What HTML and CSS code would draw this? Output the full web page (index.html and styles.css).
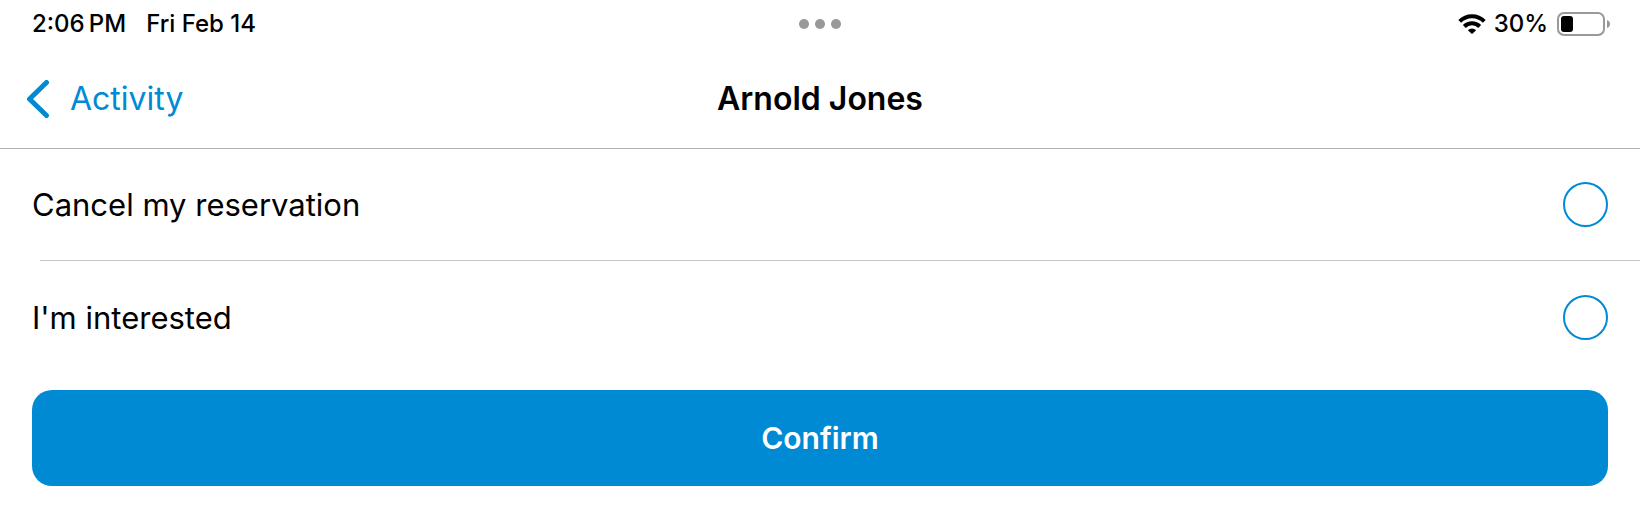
FILE: index.html
```html
<!DOCTYPE html>
<html lang="en">
<head>
<meta charset="utf-8">
<meta name="viewport" content="width=device-width, initial-scale=1">
<title>Arnold Jones</title>
<link rel="stylesheet" href="styles.css">
</head>
<body>
<div class="status">
  <div class="status-left"><span>2:06&#8201;PM</span><span>Fri Feb 14</span></div>
  <div class="dots"><span class="dot"></span><span class="dot"></span><span class="dot"></span></div>
  <div class="status-right">
    <svg class="wifi" viewBox="0 0 28 20" aria-label="Wi-Fi">
      <g fill="none" stroke="#000" stroke-width="4">
        <path d="M1.700 7.400A17.400 17.400 0 0 1 26.300 7.400"/>
        <path d="M6.300 12.500A10.900 10.900 0 0 1 21.700 12.500"/>
      </g>
      <path d="M14 20L9.800 16.200Q14 12.800 18.200 16.200Z"/>
    </svg>
    <span class="percent">30%</span>
    <svg class="battery" viewBox="0 0 53 24" aria-label="Battery">
      <rect x="1" y="1" width="46" height="22" rx="6" fill="none" stroke="#999" stroke-width="2"/>
      <rect x="4" y="4" width="12" height="16" rx="3"/>
      <path d="M50 8Q53 9 53 12T50 16Z" fill="#999"/>
    </svg>
  </div>
</div>
<header class="nav">
  <a class="back" href="#">
    <svg class="chevron" viewBox="0 0 24 38" aria-hidden="true"><path d="M20.500 2.500L3.500 19L20.500 35.500" fill="none" stroke="currentColor" stroke-width="5" stroke-linecap="round" stroke-linejoin="round"/></svg>
    <span>Activity</span>
  </a>
  <h1 class="title">Arnold Jones</h1>
</header>
<form class="form">
  <label class="option"><span>Cancel my reservation</span><input class="radio" type="radio" name="reply" value="cancel"></label>
  <hr class="divider">
  <label class="option"><span>I'm interested</span><input class="radio" type="radio" name="reply" value="interested"></label>
  <button class="confirm" type="button">Confirm</button>
</form>
</body>
</html>
```
FILE: styles.css
```css
* {
  box-sizing: border-box;
}

body {
  margin: 0;
  background: #fff;
  color: #000;
  font-family: Inter, "Liberation Sans", sans-serif;
}

.status,
.nav {
  display: grid;
  grid-template-columns: 1fr auto 1fr;
  align-items: center;
}

.status {
  height: 48px;
  padding: 0 30px;
  font-size: 24px;
  font-weight: 500;
  line-height: 46px;
}

.status-left {
  display: flex;
  gap: 20px;
  padding-left: 2px;
}

.dots {
  display: flex;
  gap: 6px;
}

.dot {
  width: 10px;
  height: 10px;
  border-radius: 50%;
  background: #999;
}

.status-right {
  display: flex;
  align-items: center;
  justify-content: flex-end;
}

.wifi {
  width: 28px;
  height: 20px;
}

.percent {
  margin: 0 9px 0 8px;
}

.battery {
  width: 53px;
  height: 24px;
}

.nav {
  padding: 2px 26px 0;
  border-bottom: 1px solid #b2b2b2;
  line-height: 98px;
}

.back {
  display: flex;
  align-items: center;
  justify-self: start;
  gap: 20px;
  color: #008ad4;
  font-size: 32px;
  text-decoration: none;
}

.chevron {
  width: 24px;
  height: 38px;
}

.title {
  margin: 0;
  font-size: 32px;
  font-weight: 600;
}

.form {
  display: flex;
  flex-direction: column;
}

.option {
  display: flex;
  align-items: center;
  justify-content: space-between;
  padding: 33px 32px;
  font-size: 31px;
  line-height: 42px;
}

.radio {
  appearance: none;
  width: 45px;
  height: 45px;
  margin: 0;
  border: 2px solid #008ad4;
  border-radius: 50%;
}

.radio:checked {
  background: #008ad4;
  box-shadow: inset 0 0 0 8px #fff;
}

.divider {
  align-self: stretch;
  height: 1px;
  margin: 0 0 1px 40px;
  border: 0;
  background: #c6c6c6;
}

.confirm {
  margin: 17px 32px 30px;
  padding: 0;
  border: 0;
  border-radius: 20px;
  background: #008ad4;
  color: #fff;
  font-family: inherit;
  font-size: 30px;
  font-weight: 600;
  line-height: 96px;
}
```
